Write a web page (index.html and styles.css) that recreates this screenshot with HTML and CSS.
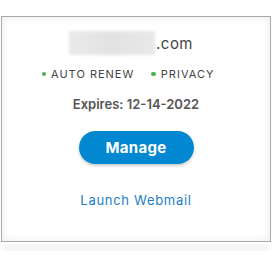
FILE: index.html
```html
<!DOCTYPE html>
<html>
<head>
<meta charset="utf-8">
<link rel="stylesheet" href="styles.css">
</head>
<body>
<div class="card">
  <div class="domain"><span class="blur"></span><span class="tld">.com</span></div>
  <div class="status">
    <span class="item"><span class="dot"></span>AUTO RENEW</span>
    <span class="item"><span class="dot"></span>PRIVACY</span>
  </div>
  <div class="expires">Expires: 12-14-2022</div>
  <button class="manage">Manage</button>
  <a class="webmail">Launch Webmail</a>
</div>
<div class="under"></div>
</body>
</html>
```
FILE: styles.css
```css
html, body { margin: 0; padding: 0; background: #fff; }
body { font-family: Inter, "Open Sans", sans-serif; }
.card {
  margin: 16px 0 0 1px;
  width: 270px;
  height: 226px;
  box-sizing: border-box;
  border: 1px solid #a9a9a9;
  box-shadow: inset 0 0 10px rgba(0,0,0,0.07);
  display: flex;
  flex-direction: column;
  align-items: center;
}
.domain {
  margin-top: 14px;
  height: 24px;
  display: flex;
  align-items: center;
  margin-left: -10px;
}
.blur {
  width: 86px;
  height: 24px;
  background: linear-gradient(90deg, #eaeaea, #e2e2e2 50%, #e9e9e9);
  filter: blur(1.5px);
}
.tld { font-size: 15px; color: #444; margin-left: 1px; letter-spacing: 0.5px; }
.status {
  margin-top: 12px;
  margin-left: -16px;
  display: flex;
  gap: 17px;
  font-size: 11px;
  letter-spacing: 1px;
  color: #444;
}
.item { display: flex; align-items: center; }
.dot {
  width: 4.5px; height: 4.5px; border-radius: 50%;
  background: #4caf50; margin-right: 5px;
}
.expires {
  margin-top: 15px;
  font-size: 13px;
  font-weight: 600;
  color: #555;
}
.manage {
  margin-top: 19px;
  width: 115px;
  height: 33px;
  flex: none;
  border: none;
  border-radius: 17px;
  background: #0288d1;
  color: #fff;
  font-family: inherit;
  font-size: 15px;
  font-weight: 700;
  letter-spacing: 0.3px;
  box-shadow: 0 2px 3px rgba(0,0,0,0.2);
  padding: 0;
}
.webmail {
  margin-top: 28px;
  font-size: 13px;
  color: #1a7fc6;
  letter-spacing: 0.7px;
}
.under {
  margin: 2px 0 0 4px;
  width: 264px;
  height: 7px;
  background: #f6f6f6;
}
```
